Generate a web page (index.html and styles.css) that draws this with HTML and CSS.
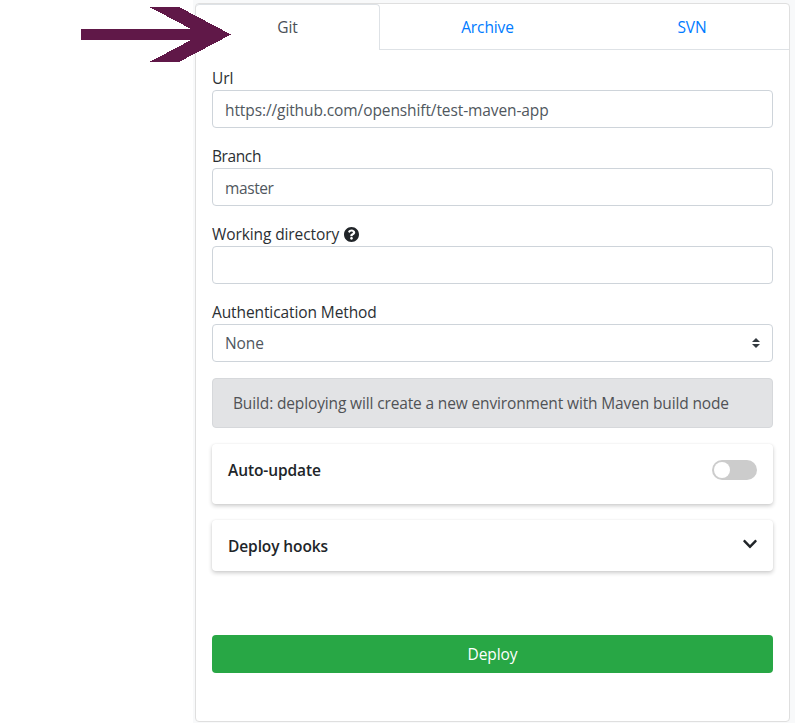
FILE: index.html
```html
<!DOCTYPE html>
<html lang="en">
<head>
<meta charset="utf-8">
<title>Deploy</title>
<link rel="stylesheet" href="styles.css">
</head>
<body>
<div class="page">
  <aside class="gutter">
    <svg class="pointer" width="150" height="55" viewBox="0 0 150 55" shape-rendering="crispEdges"><path fill="#601848" d="M0 22H110L68.500 0H98L150 27.500L98 55H68.500L110 33H0Z"/></svg>
  </aside>
  <main class="backdrop">
    <section class="panel">
      <nav class="tabs">
        <a class="tab tab-active">Git</a>
        <a class="tab tab-archive">Archive</a>
        <a class="tab tab-svn">SVN</a>
      </nav>
      <div class="form">
        <div class="field">
          <div class="label"><span>Url</span></div>
          <div class="control"><span>https://github.com/openshift/test-maven-app</span></div>
        </div>
        <div class="field">
          <div class="label"><span class="tight">Branch</span></div>
          <div class="control"><span class="tight">master</span></div>
        </div>
        <div class="field">
          <div class="label"><span>Working directory</span>
            <svg class="help" width="15" height="15" viewBox="8 8 496 496"><path fill="#212529" d="M504 256c0 136.997-111.043 248-248 248S8 392.997 8 256C8 119.083 119.043 8 256 8s248 111.083 248 248zM262.655 90c-54.497 0-89.255 22.957-116.549 63.758-3.536 5.286-2.353 12.415 2.715 16.258l34.699 26.310c5.205 3.947 12.621 3.008 16.665-2.122 17.864-22.658 30.113-35.797 57.303-35.797 20.429 0 45.698 13.148 45.698 32.958 0 14.976-12.363 22.667-32.534 33.976C247.128 238.528 216 254.941 216 296v4c0 6.627 5.373 12 12 12h56c6.627 0 12-5.373 12-12v-1.333c0-28.462 83.186-29.647 83.186-106.667 0-58.002-60.165-102-116.531-102zM256 338c-25.365 0-46 20.635-46 46 0 25.364 20.635 46 46 46s46-20.636 46-46c0-25.365-20.635-46-46-46z"/></svg>
          </div>
          <div class="control"></div>
        </div>
        <div class="field">
          <div class="label"><span>Authentication Method</span></div>
          <div class="control select"><span>None</span>
            <svg width="8" height="10" viewBox="0 0 4 5"><path fill="#343a40" d="M2 0L0 2h4zm0 5L0 3h4z"/></svg>
          </div>
        </div>
        <div class="notice"><span>Build: deploying will create a new environment with Maven build node</span></div>
        <div class="box box-update">
          <span>Auto-update</span>
          <span class="switch"></span>
        </div>
        <div class="box box-hooks">
          <span>Deploy hooks</span>
          <svg class="chevron" width="14" height="16" viewBox="0 0 448 512"><path fill="#212529" d="M207.029 381.476L12.686 187.132c-9.373-9.373-9.373-24.569 0-33.941l22.667-22.667c9.357-9.357 24.522-9.375 33.901-.04L224 284.505l154.745-154.021c9.379-9.335 24.544-9.317 33.901.04l22.667 22.667c9.373 9.373 9.373 24.569 0 33.941L240.971 381.476c-9.373 9.372-24.569 9.372-33.942 0z"/></svg>
        </div>
        <div class="deploy"><span>Deploy</span></div>
      </div>
    </section>
  </main>
</div>
</body>
</html>
```
FILE: styles.css
```css
* { box-sizing: border-box; }
body {
  margin: 0;
  background: #fff;
  color: #212529;
  font: 15.500px/24px "Open Sans", "Noto Sans", sans-serif;
  letter-spacing: -0.1px;
}
.page { display: flex; width: 795px; height: 723px; overflow: hidden; }
.gutter { width: 193px; padding: 7px 0 0 81px; }
.pointer { display: block; position: relative; z-index: 1; }
.backdrop { flex: 1; background: #f8f9fa; padding: 3px 5px 1px 2px; }
.panel {
  height: 719px;
  background: #fff;
  border: 1px solid #dfdfdf;
  border-radius: 4px;
}
.tabs { display: flex; height: 46px; }
.tab {
  flex: 1;
  padding: 11px 0;
  text-align: center;
  color: #007bff;
  border-bottom: 1px solid #dee2e6;
}
.tab-active {
  flex: 0 0 184px;
  color: #495057;
  border-right: 1px solid #dee2e6;
  border-top: 1px solid #dee2e6;
  border-bottom: 0;
  border-radius: 4px 4px 0 0;
  padding-top: 10px;
}
.tab-archive { flex: 0 0 215px; }
.form { padding: 16px; }
.field { margin-bottom: 16px; }
.label { display: flex; align-items: center; height: 24px; color: #2b2f33; }
.tight { letter-spacing: -0.400px; }
.help { margin-left: 5px; }
.control {
  display: flex;
  align-items: center;
  height: 38px;
  padding: 2px 12px 0 12px;
  border: 1px solid #ced4da;
  border-radius: 4px;
  color: #50575e;
}
.select { justify-content: space-between; padding-top: 0; }
.notice {
  height: 50px;
  padding: 12px 20px;
  margin-bottom: 16px;
  background: #e2e3e5;
  border: 1px solid #d6d8db;
  border-radius: 4px;
  color: #505256;
  letter-spacing: -0.140px;
}
.box {
  display: flex;
  justify-content: space-between;
  padding: 14px 16px 0;
  margin-bottom: 16px;
  border-radius: 4px;
  box-shadow: 0 2px 4px rgba(0, 0, 0, 0.2), 0 0 2px rgba(0, 0, 0, 0.06);
  font-weight: 600;
}
.box-update { height: 60px; }
.box-hooks { height: 51px; }
.switch {
  width: 45px;
  height: 20px;
  margin-top: 2px;
  padding: 2px;
  border-radius: 10px;
  background: #ccc;
}
.switch::before {
  content: "";
  display: block;
  width: 16px;
  height: 16px;
  border-radius: 50%;
  background: #fff;
}
.chevron { margin-top: 2px; }
.deploy {
  height: 38px;
  margin-top: 64px;
  padding-top: 7px;
  border-radius: 4px;
  background: #28a745;
  color: #fff;
  text-align: center;
}
```
